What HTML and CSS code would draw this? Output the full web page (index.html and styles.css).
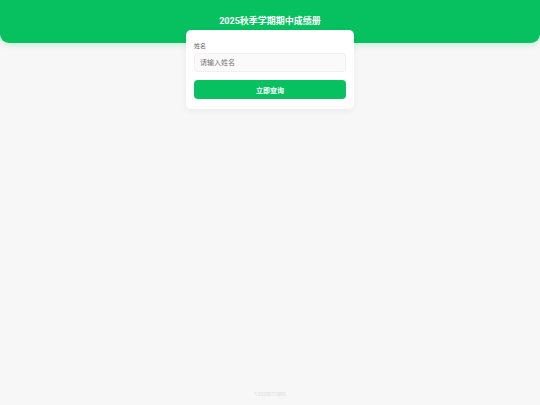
FILE: index.html
```html
<!DOCTYPE html>
<html lang="zh-CN">
<head>
<meta charset="UTF-8">
<meta name="viewport" content="width=device-width, initial-scale=1">
<title>2025秋季学期期中成绩册</title>
<link rel="stylesheet" href="styles.css">
</head>
<body>
<header class="header"><h1 class="title">2025秋季学期期中成绩册</h1></header>
<main class="main">
<form class="card">
<label class="label" for="name">姓名</label>
<input class="input" id="name" type="text" placeholder="请输入姓名">
<button class="button" type="button">立即查询</button>
</form>
</main>
<footer class="footer">12020071880</footer>
</body>
</html>
```
FILE: styles.css
```css
* {
  box-sizing: border-box;
}

body {
  margin: 0;
  min-height: 100vh;
  display: flex;
  flex-direction: column;
  background: #f7f7f7;
  color: #333;
  font-family: Roboto, "Noto Sans CJK SC", sans-serif;
}

.header {
  padding: 15px 10px 16px;
  background: #07c160;
  border-radius: 0 0 9px 9px;
  box-shadow: 0 2px 6px rgba(7, 193, 96, 0.2);
  text-align: center;
}

.title {
  margin: 0;
  color: #fff;
  font-size: 9px;
  line-height: 12px;
  font-weight: 700;
}

.main {
  flex: 1;
  width: 100%;
  max-width: 168px;
  margin: -13px auto 0;
}

.card {
  display: flex;
  flex-direction: column;
  padding: 12px 8px 10px;
  background: #fff;
  border-radius: 5px;
  box-shadow: 0 2px 7px rgba(0, 0, 0, 0.05);
}

.label {
  margin-bottom: 3px;
  color: #666;
  font-size: 6px;
  line-height: 8px;
  font-weight: 400;
}

.input {
  width: 100%;
  height: 19px;
  margin-bottom: 8px;
  padding: 0 5px;
  border: 1px solid #f0f0f0;
  border-radius: 4px;
  background: #fafafa;
  color: #333;
  font: inherit;
  font-size: 7px;
}

.input::placeholder {
  color: #757575;
}

.button {
  height: 19px;
  padding: 0;
  border: 0;
  border-radius: 4px;
  background: #07c160;
  color: #fff;
  font: inherit;
  font-size: 7px;
  font-weight: 700;
}

.footer {
  padding: 8px;
  color: #ddd;
  font-size: 5px;
  line-height: 6px;
  text-align: center;
}
```
